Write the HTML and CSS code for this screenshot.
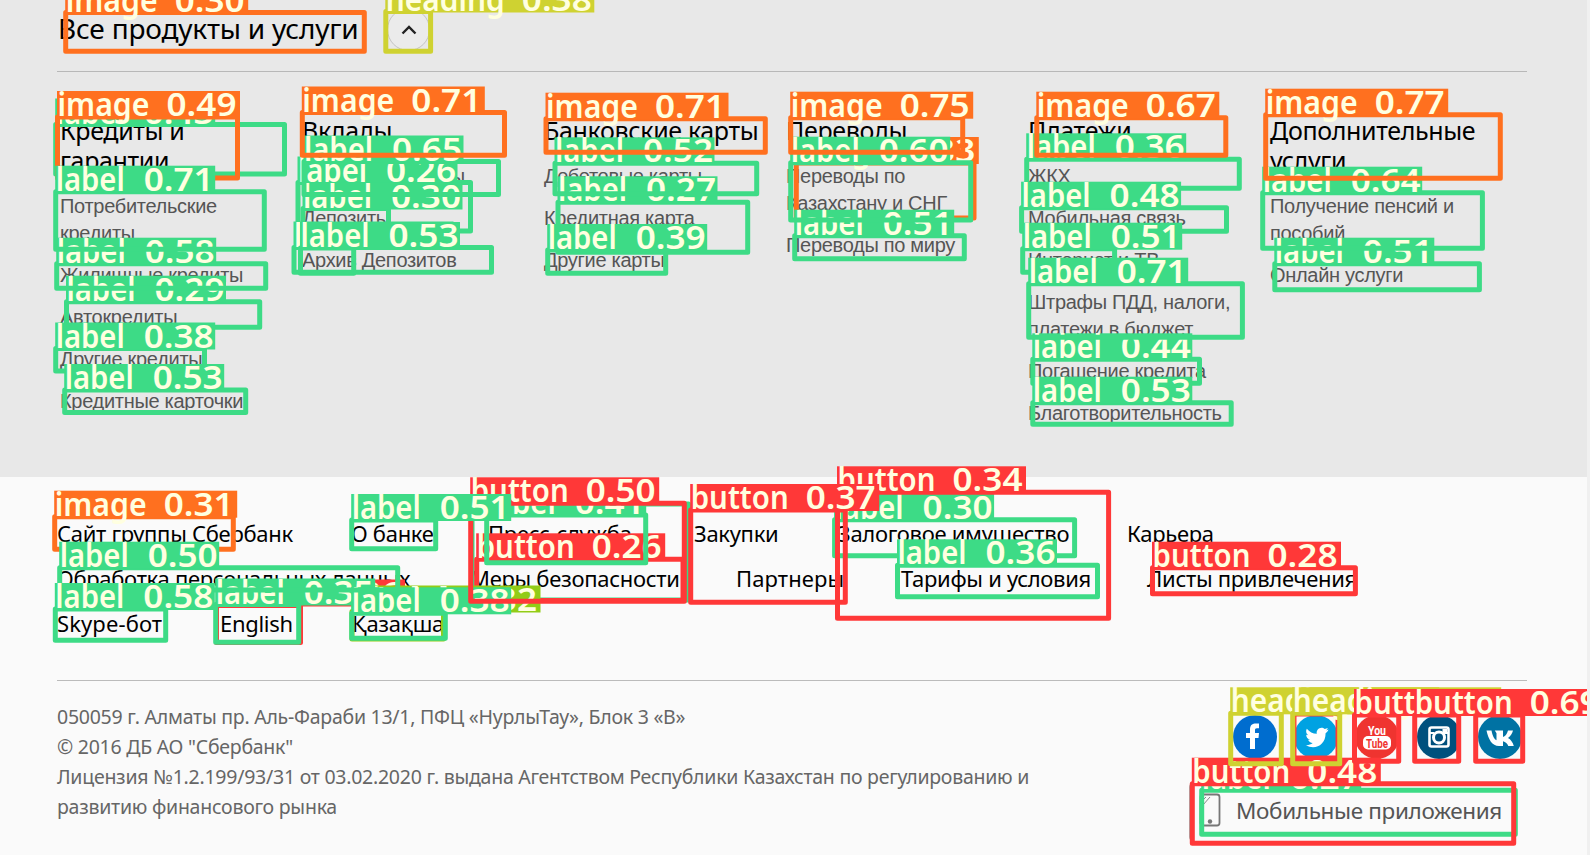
FILE: index.html
```html
<!DOCTYPE html>
<html lang="ru">
<head>
<meta charset="utf-8">
<title>Все продукты и услуги</title>
<link rel="stylesheet" href="styles.css">
</head>
<body>
<section class="products">
  <header class="products-head">
    <h1 class="products-title">Все продукты и услуги</h1>
    <button class="toggle" aria-label="Свернуть"><svg width="16" height="10" viewBox="0 0 16 10"><path d="M1.5 8.5 8 2l6.5 6.5" fill="none" stroke="#222" stroke-width="2.4"/></svg></button>
  </header>
  <div class="columns">
    <div class="col"><h2>Кредиты и гарантии</h2><a>Потребительские кредиты</a><a>Жилищные кредиты</a><a>Автокредиты</a><a>Другие кредиты</a><a>Кредитные карточки</a></div>
    <div class="col"><h2>Вклады</h2><a>Онлайн Депозиты</a><a>Депозить</a><a>Архив Депозитов</a></div>
    <div class="col"><h2 class="nowrap">Банковские карты</h2><a>Дебетовые карты</a><a>Кредитная карта</a><a>Другие карты</a></div>
    <div class="col"><h2>Переводы</h2><a>Переводы по Казахстану и СНГ</a><a>Переводы по миру</a></div>
    <div class="col"><h2>Платежи</h2><a>ЖКХ</a><a>Мобильная связь</a><a>Интернет и ТВ</a><a>Штрафы ПДД, налоги, платежи в бюджет</a><a>Погашение кредита</a><a>Благотворительность</a></div>
    <div class="col"><h2>Дополнительные услуги</h2><a>Получение пенсий и пособий</a><a>Онлайн услуги</a></div>
  </div>
</section>
<footer class="footer">
  <nav class="links">
    <div class="row row-a"><a>Сайт группы Сбербанк</a><a>О банке</a><a>Пресс-служба</a><a>Закупки</a><a>Залоговое имущество</a><a>Карьера</a></div>
    <div class="row row-b"><a>Обработка персональных данных</a><a>Меры безопасности</a><a class="wide">Партнеры</a><a>Тарифы и условия</a><a>Листы привлечения</a></div>
    <div class="row row-c"><a class="wide">Skype-бот</a><a>English</a><a>Қазақша</a></div>
  </nav>
  <div class="bottom">
    <p class="legal">050059 г. Алматы пр. Аль-Фараби 13/1, ПФЦ «НурлыТау», Блок 3 «В»<br>© 2016 ДБ АО "Сбербанк"<br>Лицензия №1.2.199/93/31 от 03.02.2020 г. выдана Агентством Республики Казахстан по регулированию и<br>развитию финансового рынка</p>
    <div class="side">
      <div class="social">
        <svg viewBox="0 0 44 44"><circle cx="22" cy="22" r="22" fill="#006dcf"/><path d="M17 34V23h-4v-5h4v-3.500c0-4.500 2.500-6 6-6h3v4.800h-2c-1.700 0-2 .7-2 2V18h4l-.5 5H22v11z" fill="#fff"/></svg>
        <svg viewBox="0 0 44 44"><circle cx="22" cy="22" r="22" fill="#00a2e2"/><path d="M34.500 14.500l-2.700 1c1-.7 1.700-1.500 2-2.600l-3 1.200c-3.600-3.500-9 .1-8 4.600-4 0-7.400-2-10-5-1.300 2.400-.7 5 1.500 6.600l-2.100-.5c0 2.500 1.600 4.200 3.900 4.900l-2 .1c.7 2 2.400 3.200 4.600 3.300-2 1.600-4.300 2.200-7 2 9 5.600 20 0 19.900-11.900 1.200-.8 2.200-2 2.900-3.700z" fill="#fff"/></svg>
        <svg viewBox="0 0 44 44"><circle cx="22" cy="22" r="22" fill="#ef3430"/><text x="22" y="19.500" text-anchor="middle" textLength="18" lengthAdjust="spacingAndGlyphs" class="yt" fill="#fff">You</text><rect x="8" y="21" width="28" height="13.500" rx="5" fill="#fff"/><text x="22" y="33" text-anchor="middle" textLength="22" lengthAdjust="spacingAndGlyphs" class="yt" fill="#ef3430">Tube</text></svg>
        <svg viewBox="0 0 44 44"><circle cx="22" cy="22" r="22" fill="#00507d"/><rect x="12.500" y="12.500" width="19" height="19" rx="2" fill="none" stroke="#fff" stroke-width="2.600"/><circle cx="22" cy="22.500" r="5.500" fill="none" stroke="#fff" stroke-width="3"/><path d="M12 18h5M27 18h5" stroke="#fff" stroke-width="2"/><rect x="25.500" y="14" width="4.500" height="4" fill="#fff"/></svg>
        <svg viewBox="0 0 44 44"><circle cx="22" cy="22" r="22" fill="#0072a3"/><path d="M21 31C14 31 10.500 24.500 8.500 15.500h5c1 5.500 3 9 5 9.700v-7l-1.700-2.700H25v6.500c2-.5 4-3 5-6.500h5c-.8 3-2.500 5.600-5 7.500 2.800 1.500 4.700 4.200 5.800 8h-5.500c-1-2.500-2.700-4.200-5.300-4.800V31z" fill="#fff"/></svg>
      </div>
      <a class="apps"><svg width="22" height="34" viewBox="0 0 22 34"><rect x="1.500" y="1.500" width="19" height="31" rx="2.500" fill="none" stroke="#777" stroke-width="1.800"/><path d="M4 7l3-3M4 12l7-8" stroke="#888"/><circle cx="11" cy="28.500" r="2.200" fill="#777"/></svg><span>Мобильные приложения</span></a>
    </div>
  </div>
</footer>
<svg id="overlay" class="overlay" width="1590" height="855" viewBox="0 0 1590 855"></svg>
<script src="overlay.js"></script>
</body>
</html>
```
FILE: styles.css
```css
* { box-sizing: border-box; }
body { margin: 0; width: 1590px; height: 855px; overflow: hidden; position: relative; background: #fafafa; font-family: "Noto Sans", "Open Sans", sans-serif; color: #000; border-right: 3px solid #f0f0f0; }
h1, h2, p { margin: 0; font-weight: 400; }
a { color: inherit; text-decoration: none; }

.products { height: 477px; background: #e8e8e8; padding: 0 63px 0 57px; margin-right: -3px; }
.products-head { display: flex; align-items: center; height: 72px; padding-bottom: 12px; border-bottom: 1px solid #b8b8b8; }
.products-title { width: 330px; padding: 0 0 4px 1px; font-size: 28px; line-height: 38px; letter-spacing: -0.2px; white-space: nowrap; }
.toggle { display: flex; align-items: center; justify-content: center; width: 43px; height: 43px; padding: 0; border: 1px solid #c4c4c4; border-radius: 50%; background: #ebebeb; }
.columns { display: grid; grid-template-columns: repeat(6, 242px); padding: 43px 0 0 3px; }
.col { display: flex; flex-direction: column; gap: 15px; padding-right: 22px; }
.col h2 { font-size: 25px; line-height: 30px; margin-bottom: 3px; letter-spacing: -0.35px; }
.col .nowrap { white-space: nowrap; }
.col a { font: 20px/27px "Liberation Sans", Arial, sans-serif; color: #555; letter-spacing: -0.3px; }

.footer { padding: 34px 63px 0 57px; margin-right: -3px; }
.links { height: 170px; border-bottom: 1px solid #bbb; }
.row { display: grid; height: 45px; font-size: 22px; line-height: 45px; letter-spacing: -0.3px; white-space: nowrap; }
.row-a { grid-template-columns: 294px 137px 206px 144px 289px 120px; }
.row-b { grid-template-columns: 413px 266px 165px 246px 230px; }
.row-c { grid-template-columns: 163px 132px 120px; }
.wide { letter-spacing: 0.1px; }
.bottom { display: flex; justify-content: space-between; }
.legal { flex: none; width: 980px; padding-top: 21px; font-size: 19.5px; line-height: 30px; color: #666; white-space: nowrap; letter-spacing: -0.25px; }
.side { display: flex; flex-direction: column; align-items: flex-end; padding-top: 34px; }
.social { display: flex; gap: 17.300px; padding-right: 5px; }
.social svg { width: 44px; height: 44px; }
.yt { font: 700 13px Roboto, sans-serif; }
.apps { display: flex; align-items: center; gap: 15px; width: 326px; height: 60px; margin: 23px 12px 0 0; padding: 0 0 4px 9px; border: 1px solid #aaa; border-radius: 5px; font-size: 22.500px; color: #555; white-space: nowrap; letter-spacing: -0.35px; }

.overlay { position: absolute; left: 0; top: 0; pointer-events: none; }
.tag { font: 600 32px "Noto Sans", sans-serif; fill: #ffffe0; }
```
FILE: overlay.js
```js
// Detection boxes: class, score, left, top, right, bottom. Later entries lie on top.
const boxes = [
  ["label", "", 472, 504, 688.5, 600],
  ["button", "0.26", 216.5, 605.5, 300.5, 642.5],
  ["button", "", 1294, 714, 1338, 758],
  ["label", "0.26", 298, 182.5, 470.5, 231],
  ["button", "0.26", 476.7, 559.3, 683, 600.5],
  ["label", "0.27", 558, 202.3, 747.7, 252.3],
  ["label", "0.27", 1201.7, 790.3, 1515.3, 834.3],
  ["button", "0.28", 1152.5, 567.7, 1355.4, 593.7],
  ["label", "0.29", 66.5, 301.7, 259.7, 327.3],
  ["label", "0.30", 303, 208.5, 388.5, 233],
  ["label", "0.30", 834.6, 519.7, 1074.6, 555.7],
  ["image", "0.30", 65.7, 12.5, 364.3, 51.3],
  ["image", "0.31", 54.7, 516.7, 233.3, 549.3],
  ["field", "0.32", 352, 611.5, 443.5, 639],
  ["image", "0.33", 796.3, 163, 974, 218],
  ["button", "0.34", 837.5, 492.3, 1108.6, 618.3],
  ["label", "0.35", 215.7, 604.5, 298.7, 642.3],
  ["label", "0.36", 1026.7, 159.3, 1239.3, 188.3],
  ["label", "0.36", 897.5, 565.3, 1097.5, 596.7],
  ["button", "0.37", 690.7, 510, 845.3, 602.3],
  ["label", "0.38", 55.7, 348.5, 204.5, 371],
  ["label", "0.38", 351.7, 613.3, 445.3, 638.3],
  ["heading", "0.38", 385.8, 11.5, 430.6, 51.3],
  ["label", "0.39", 547.7, 250, 665.7, 273.3],
  ["label", "0.41", 486.7, 515, 645.7, 562.7],
  ["label", "0.43", 55.7, 124.5, 284.5, 174],
  ["label", "0.44", 1032.8, 359.3, 1199.5, 383.3],
  ["button", "0.48", 1192.3, 783.7, 1513.7, 843.3],
  ["label", "0.48", 1021.6, 207.7, 1226.5, 231.3],
  ["image", "0.49", 57.5, 117, 237.5, 178],
  ["label", "0.50", 59.7, 567.7, 397.7, 590],
  ["button", "0.50", 470.7, 503.3, 684.3, 601.3],
  ["label", "0.51", 351.7, 520, 435.7, 548.7],
  ["label", "0.51", 794.7, 235.7, 964.3, 258.7],
  ["label", "0.51", 1022.7, 248.7, 1114.6, 272.3],
  ["label", "0.51", 1274.8, 263.7, 1479.4, 289.7],
  ["label", "0.52", 555, 163.3, 756.7, 193.7],
  ["label", "0.53", 294, 247.5, 491.5, 272.3],
  ["label", "0.53", 300.5, 248, 353.7, 273.3],
  ["label", "0.53", 64.7, 390, 245.7, 412.5],
  ["label", "0.53", 1032.8, 402.7, 1231.2, 424.3],
  ["heading", "0.55", 1230.7, 713.3, 1281.3, 763.7],
  ["heading", "0.57", 1292.7, 713.3, 1339.7, 763.7],
  ["label", "0.58", 56.7, 263.7, 265.7, 288.3],
  ["label", "0.58", 55.3, 609, 165.7, 640.3],
  ["label", "0.60", 790.7, 162.7, 970.7, 220],
  ["button", "0.62", 1475.7, 715, 1522.7, 761.3],
  ["label", "0.64", 1262.7, 192.7, 1482.4, 248.3],
  ["label", "0.65", 304, 161.5, 498.5, 194.5],
  ["button", "0.66", 1354.5, 715, 1398.7, 761.3],
  ["image", "0.67", 1036.8, 117.7, 1225.8, 155.3],
  ["button", "0.69", 1414.7, 715, 1458.7, 761.3],
  ["label", "0.71", 55.7, 191.7, 264.3, 249.3],
  ["label", "0.71", 1028.7, 283.7, 1242.4, 337.3],
  ["image", "0.71", 302.3, 112.5, 504.5, 155.3],
  ["image", "0.71", 546, 118.7, 765.3, 152.3],
  ["image", "0.75", 790.7, 117.7, 962.7, 152.3],
  ["image", "0.77", 1265.7, 114.7, 1500.3, 178.3]
];

const kinds = {
  label: { color: "#3ddb86", width: 160, word: 69, score: 88 },
  image: { color: "#ff701f", width: 183, word: 92, score: 109 },
  button: { color: "#ff3838", width: 189, word: 98, score: 115 },
  heading: { color: "#cfd231", width: 209, word: 119, score: 136 },
  field: { color: "#92cc17", width: 189, word: 98, score: 115 }
};

const svg = document.getElementById("overlay");
function add(name, attrs, text) {
  const el = document.createElementNS("http://www.w3.org/2000/svg", name);
  for (const key in attrs) el.setAttribute(key, attrs[key]);
  if (text) el.textContent = text;
  svg.appendChild(el);
}
for (const [kind, score, x1, y1, x2, y2] of boxes) {
  const k = kinds[kind];
  add("rect", { x: x1, y: y1, width: x2 - x1, height: y2 - y1, fill: "none", stroke: k.color, "stroke-width": 5, "stroke-linejoin": "round" });
  if (!score) continue;
  add("rect", { x: x1 - 0.5, y: y1 - 26, width: k.width, height: 27, fill: k.color });
  add("text", { class: "tag", x: x1, y: y1 - 1, textLength: k.word, lengthAdjust: "spacingAndGlyphs" }, kind);
  add("text", { class: "tag", x: x1 + k.score, y: y1 - 1, textLength: 70, lengthAdjust: "spacingAndGlyphs" }, score);
}
```
